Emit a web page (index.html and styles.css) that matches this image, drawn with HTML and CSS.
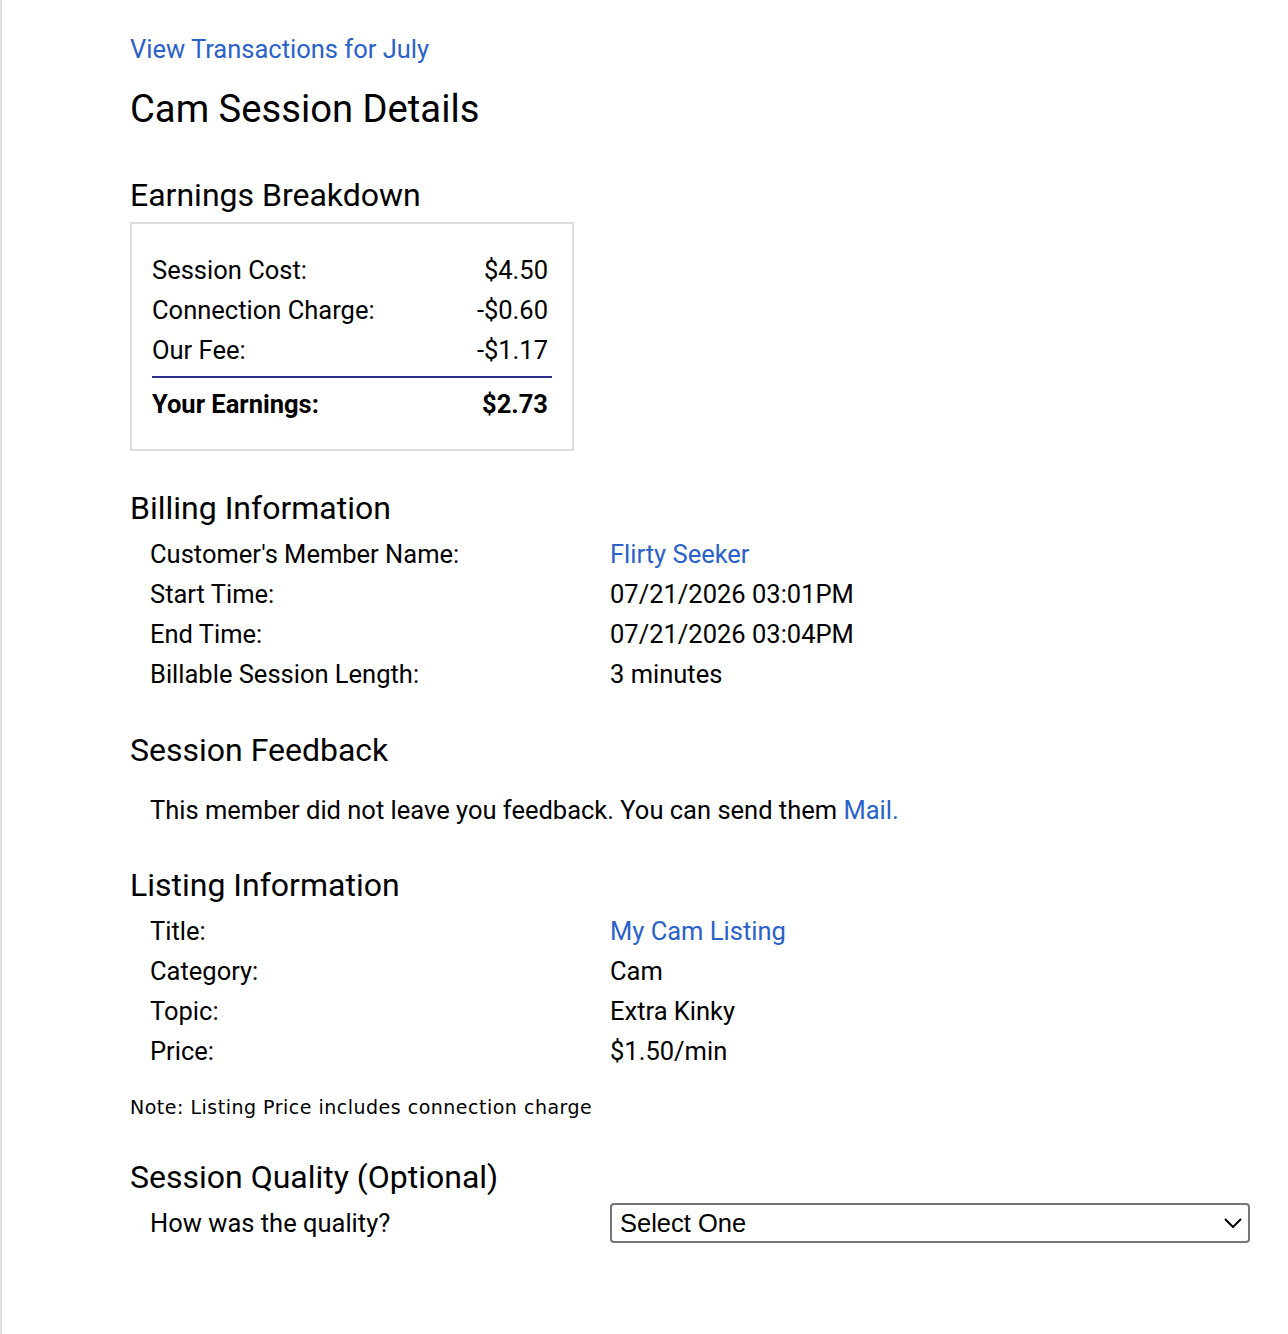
FILE: index.html
```html
<!DOCTYPE html>
<html lang="en">
<head>
<meta charset="utf-8">
<title>Cam Session Details</title>
<link rel="stylesheet" href="styles.css">
</head>
<body>
<div class="page">
  <a class="back-link" href="#">View Transactions for July</a>
  <h1 class="title">Cam Session Details</h1>

  <h2 class="section-title first">Earnings Breakdown</h2>
  <div class="earnings">
    <div class="earn-row"><span>Session Cost:</span><span class="amt">$4.50</span></div>
    <div class="earn-row"><span>Connection Charge:</span><span class="amt">-$0.60</span></div>
    <div class="earn-row"><span>Our Fee:</span><span class="amt">-$1.17</span></div>
    <div class="earn-rule"></div>
    <div class="earn-row total"><span>Your Earnings:</span><span class="amt">$2.73</span></div>
  </div>

  <h2 class="section-title after-box">Billing Information</h2>
  <div class="info">
    <div class="label">Customer's Member Name:</div><div class="value"><a href="#">Flirty Seeker</a></div>
    <div class="label">Start Time:</div><div class="value">07/21/2026 03:01PM</div>
    <div class="label">End Time:</div><div class="value">07/21/2026 03:04PM</div>
    <div class="label">Billable Session Length:</div><div class="value">3 minutes</div>
  </div>

  <h2 class="section-title">Session Feedback</h2>
  <p class="feedback">This member did not leave you feedback. You can send them <a href="#">Mail.</a></p>

  <h2 class="section-title listing-title">Listing Information</h2>
  <div class="info">
    <div class="label">Title:</div><div class="value"><a href="#">My Cam Listing</a></div>
    <div class="label">Category:</div><div class="value">Cam</div>
    <div class="label">Topic:</div><div class="value">Extra Kinky</div>
    <div class="label">Price:</div><div class="value">$1.50/min</div>
  </div>
  <p class="note">Note: Listing Price includes connection charge</p>

  <h2 class="section-title quality-title">Session Quality (Optional)</h2>
  <div class="info">
    <div class="label">How was the quality?</div>
    <div class="value">
      <div class="select-wrap">
        <select class="quality">
          <option>Select One</option>
          <option>Excellent</option>
          <option>Good</option>
          <option>Fair</option>
          <option>Poor</option>
        </select>
        <svg class="chevron" width="18" height="10" viewBox="0 0 18 10" aria-hidden="true"><path d="M1 1 L9 9 L17 1" fill="none" stroke="#000" stroke-width="2"/></svg>
      </div>
    </div>
  </div>
</div>
</body>
</html>
```
FILE: styles.css
```css
html, body {
  margin: 0;
  padding: 0;
  background: #fff;
}

body {
  font-family: Roboto, "Liberation Sans", Arial, sans-serif;
  color: #000;
  font-size: 25.5px;
}

.page {
  border-left: 2px solid #e0e0e0;
  min-height: 1334px;
  box-sizing: border-box;
  padding: 29px 0 0 128px;
}

a {
  color: #2a62c9;
  text-decoration: none;
}

.back-link {
  display: block;
  font-size: 25.5px;
  line-height: 40px;
  width: max-content;
}

.title {
  margin: 15px 0 0;
  font-size: 38.2px;
  font-weight: 400;
  line-height: 50px;
}

.section-title {
  margin: 36px 0 0;
  font-size: 32px;
  font-weight: 400;
  line-height: 40px;
}

.section-title.first {
  margin-top: 41px;
}

.section-title.after-box {
  margin-top: 37px;
}

.section-title.listing-title {
  margin-top: 35px;
}

.section-title.quality-title {
  margin-top: 35px;
}

.earnings {
  margin-top: 7px;
  width: 444px;
  box-sizing: border-box;
  border: 2px solid #dddddd;
  padding: 26px 20px 25px 20px;
}

.earn-row {
  display: flex;
  justify-content: space-between;
  line-height: 40px;
  padding-right: 4px;
}

.earn-row.total {
  font-weight: 700;
}

.earn-rule {
  height: 2px;
  background: #2b2e8c;
  margin: 6px 0;
}

.info {
  display: grid;
  grid-template-columns: 460px 1fr;
  margin-top: 6px;
  padding-left: 20px;
  line-height: 40px;
}

.feedback {
  margin: 20px 0 0;
  padding-left: 20px;
  line-height: 40px;
}

.note {
  margin: 21px 0 0;
  font-family: "DejaVu Sans", Verdana, sans-serif;
  font-size: 19px;
  letter-spacing: 0.5px;
  line-height: 30px;
}

.select-wrap {
  position: relative;
  width: 640px;
}

.quality {
  display: block;
  width: 640px;
  height: 40px;
  box-sizing: border-box;
  border: 2px solid #767676;
  border-radius: 4px;
  background: #fff;
  color: #000;
  font-family: "Liberation Sans", Arial, sans-serif;
  font-size: 25.5px;
  padding: 0 40px 0 8px;
  appearance: none;
  -webkit-appearance: none;
}

.chevron {
  position: absolute;
  right: 8px;
  top: 15px;
  pointer-events: none;
}
```
